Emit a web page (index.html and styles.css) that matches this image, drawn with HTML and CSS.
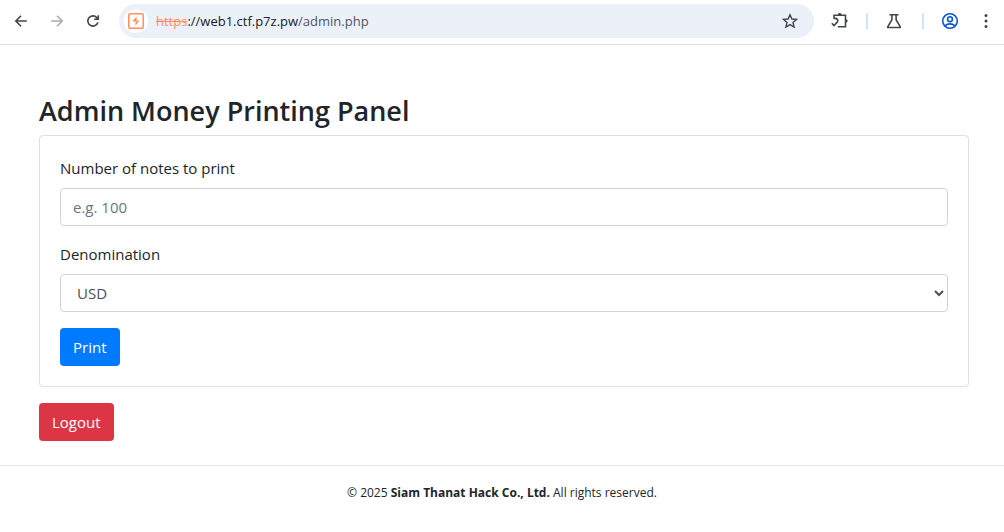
FILE: index.html
```html
<!DOCTYPE html>
<html lang="en">
<head>
<meta charset="utf-8">
<meta name="viewport" content="width=device-width, initial-scale=1">
<title>Admin Money Printing Panel</title>
<link rel="stylesheet" href="styles.css">
</head>
<body>
<header class="toolbar">
  <nav class="nav-buttons" aria-label="Navigation">
    <button class="icon-button" type="button" aria-label="Back">
      <svg class="icon" viewBox="0 0 16 16"><path d="M13.8 8H3M8 2.8 2.8 8 8 13.2"/></svg>
    </button>
    <button class="icon-button icon-button-muted" type="button" aria-label="Forward">
      <svg class="icon" viewBox="0 0 16 16"><path d="M2.2 8H13M8 2.8 13.2 8 8 13.2"/></svg>
    </button>
    <button class="icon-button" type="button" aria-label="Reload">
      <svg class="icon" viewBox="0 0 16 16"><path d="M12.9 9.2A5.1 5.1 0 1 1 11.8 4.6L13 6M13.3 2.2V6.3H9.2"/></svg>
    </button>
  </nav>
  <div class="address-bar">
    <span class="site-badge">
      <svg class="site-icon" viewBox="0 0 16 16"><rect x=".8" y=".8" width="14.4" height="14.4" rx="1.8" fill="none" stroke="#ff8f5e" stroke-width="1.5"/><path d="M8.6 3.4 4.4 8.5H8.6ZM7.4 12.8V9.6L8.6 7.6H11.4Z" fill="#ff8f5e"/></svg>
    </span>
    <span class="url"><s class="url-scheme">https</s><span class="url-host">://web1.ctf.p7z.pw</span>/admin.php</span>
    <button class="icon-button star-button" type="button" aria-label="Bookmark">
      <svg class="icon icon-star" viewBox="0 0 16 16"><path d="m8 1.7 1.9 4.3 4.7.4-3.6 3.1 1.1 4.6L8 11.6l-4.1 2.5L5 9.5 1.4 6.4l4.7-.4Z"/></svg>
    </button>
  </div>
  <div class="actions">
    <button class="icon-button" type="button" aria-label="Extensions">
      <svg class="icon icon-large" viewBox="0 0 18 18"><path d="M3 6.8V3.2H14.5V14.8H6.8M3 6.4H4.2Q6.9 6.6 6.8 9.4M.8 11.3l2.2 2.3 3.9-4.2"/><path d="M7 3V1.6Q8.7.2 10.4 1.6V3ZM14.5 7.2h1.2Q17.6 8.9 15.7 10.6h-1.2Z" fill="currentColor" stroke="none"/></svg>
    </button>
    <span class="separator"></span>
    <button class="icon-button icon-button-labs" type="button" aria-label="Labs">
      <svg class="icon icon-large" viewBox="0 0 18 18"><path d="M4.4 2.7h9.2M6.9 2.7v5L2.7 14.8q-.4.7.5.7h11.6q.9 0 .5-.7L11.1 7.7v-5"/></svg>
    </button>
    <span class="separator"></span>
    <button class="icon-button icon-button-accent" type="button" aria-label="Profile">
      <svg class="icon icon-large" viewBox="0 0 18 18"><circle cx="9" cy="9" r="7.3"/><circle cx="9" cy="7.2" r="2.4"/><path d="M3.9 14q2.1-2.1 5.1-2.1t5.1 2.1"/></svg>
    </button>
    <button class="icon-button" type="button" aria-label="Menu">
      <svg class="icon" viewBox="0 0 16 16"><g fill="currentColor" stroke="none"><circle cx="8" cy="2.5" r="1.5"/><circle cx="8" cy="8" r="1.5"/><circle cx="8" cy="13.5" r="1.5"/></g></svg>
    </button>
  </div>
</header>
<main class="container">
  <h1 class="title">Admin Money Printing Panel</h1>
  <form class="card">
    <div class="form-group">
      <label class="form-label" for="notes">Number of notes to print</label>
      <input class="form-control" id="notes" type="text" inputmode="numeric" placeholder="e.g. 100">
    </div>
    <div class="form-group">
      <label class="form-label" for="denomination">Denomination</label>
      <select class="form-control form-select" id="denomination"><option>USD</option></select>
    </div>
    <button class="button button-primary" type="button">Print</button>
  </form>
  <a class="button button-danger" href="#">Logout</a>
</main>
<footer class="footer">© 2025 <strong>Siam Thanat Hack Co., Ltd.</strong> All rights reserved.</footer>
</body>
</html>
```
FILE: styles.css
```css
*, *::before, *::after { box-sizing: border-box; }

body {
  margin: 0;
  background: #fff;
  color: #212529;
  font: 15px/24px "Open Sans", "Noto Sans", sans-serif;
}

.toolbar {
  display: flex;
  align-items: center;
  height: 45px;
  padding: 0 9px 2px;
  border-bottom: 1px solid #dfe1e4;
}

.nav-buttons { display: flex; gap: 12px; margin-right: 14px; }

.icon-button {
  display: flex;
  align-items: center;
  justify-content: center;
  width: 24px;
  height: 24px;
  padding: 0;
  border: 0;
  background: none;
  color: #43474b;
}
.icon-button-muted { color: #a9abae; }
.icon-button-labs { margin-right: 2px; }

.icon {
  width: 16px;
  height: 16px;
  fill: none;
  stroke: currentColor;
  stroke-width: 1.6;
}
.icon-large { width: 18px; height: 18px; }
.icon-star { stroke-width: 1.4; }

.address-bar {
  display: flex;
  flex: 1;
  align-items: center;
  height: 34px;
  padding: 0 12px 0 5px;
  border-radius: 17px;
  background: #ecf0f9;
}
.site-badge {
  display: flex;
  align-items: center;
  justify-content: center;
  width: 24px;
  height: 24px;
  margin-right: 8px;
  border-radius: 50%;
  background: #fff;
}
.site-icon { width: 16px; height: 16px; }
.url { color: #51565d; font-size: 13px; }
.url-scheme { color: #ff8f5e; }
.url-host { color: #202124; }
.star-button { margin-left: auto; }

.actions { display: flex; align-items: center; margin-left: 14px; }
.separator {
  width: 2px;
  height: 16px;
  margin: 0 14px;
  background: #d3e3fd;
}
.icon-button-accent { margin-right: 12px; color: #0b57d0; }
.actions .icon-button:last-child { margin-right: -3px; }

.container { padding: 48px 35px 24px 39px; }

.title {
  margin: 0 0 6px;
  font-size: 27px;
  font-weight: 600;
  line-height: 36px;
}

.card {
  margin-bottom: 16px;
  padding: 20px;
  border: 1px solid #dfdfdf;
  border-radius: 4px;
}

.form-group { margin-bottom: 16px; }
.form-label { display: block; margin-bottom: 8px; }
.form-control {
  display: block;
  width: 100%;
  height: 38px;
  padding: 6px 12px;
  border: 1px solid #ced4da;
  border-radius: 4px;
  background: #fff;
  color: #495057;
  font: inherit;
}
.form-control::placeholder { color: #6c757d; opacity: 1; }
.form-select { padding: 6px 0 6px 12px; }

.button {
  display: inline-block;
  height: 38px;
  padding: 6px 12px;
  border: 1px solid transparent;
  border-radius: 4px;
  color: #fff;
  font: inherit;
  text-decoration: none;
  vertical-align: top;
}
.button-primary { background: #007bff; }
.button-danger { background: #dc3545; }

.footer {
  padding: 15px 16px 16px;
  border-top: 1px solid #e5e5e5;
  font-size: 12px;
  text-align: center;
}
```
